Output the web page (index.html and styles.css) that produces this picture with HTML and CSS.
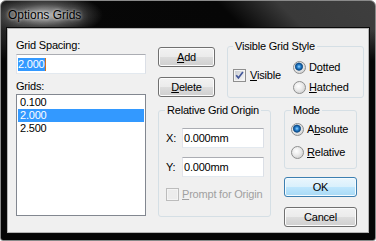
FILE: index.html
```html
<!doctype html>
<html lang="en">

<head>
    <meta charset="UTF-8" />
    <title>Options Grids</title>
    <link rel="stylesheet" href="styles.css">
</head>

<body>
    <div class="window">
        <!-- Title bar -->
        <div class="titlebar">
            <span class="title">Options Grids</span>
        </div>

        <div class="client">
            <!-- Grid list -->
            <div class="col-left">
                <div class="label">Grid Spacing:</div>
                <div class="textbox wide"><span class="sel">2.000</span><span class="caret"></span></div>
                <div class="label grids-label">Grids:</div>
                <div class="listbox">
                    <div class="item">0.100</div>
                    <div class="item selected">2.000</div>
                    <div class="item">2.500</div>
                </div>
            </div>

            <div class="col-right">
                <div class="row-top">
                    <div class="btn-stack">
                        <button class="btn"><u>A</u>dd</button>
                        <button class="btn"><u>D</u>elete</button>
                    </div>

                    <fieldset class="group style-group">
                        <legend>Visible Grid Style</legend>
                        <div class="opt check-item">
                            <svg class="cb" width="13" height="13" viewBox="0 0 13 13">
                                <defs>
                                    <linearGradient id="cbg" x1="0" y1="0" x2="1" y2="1">
                                        <stop offset="0" stop-color="#c9cdd3" />
                                        <stop offset="1" stop-color="#f7f7f7" />
                                    </linearGradient>
                                </defs>
                                <rect x="0.5" y="0.5" width="12" height="12" fill="#f4f4f4" stroke="#8f8f8f" />
                                <rect x="2" y="2" width="9" height="9" fill="url(#cbg)" />
                                <path d="M3.2 6.2 L5.4 8.9 L9.9 3.1" fill="none" stroke="#43579a" stroke-width="1.7" />
                            </svg>
                            <span class="wide-gap"><u>V</u>isible</span>
                        </div>
                        <div class="radio-col">
                            <div class="opt"><span class="radio on"></span><span>D<u>o</u>tted</span></div>
                            <div class="opt"><span class="radio"></span><span><u>H</u>atched</span></div>
                        </div>
                    </fieldset>
                </div>

                <div class="row-bottom">
                    <fieldset class="group origin-group">
                        <legend>Relative Grid Origin</legend>
                        <div class="field">
                            <span class="field-label">X:</span>
                            <div class="textbox small">0.000mm</div>
                        </div>
                        <div class="field field-y">
                            <span class="field-label">Y:</span>
                            <div class="textbox small">0.000mm</div>
                        </div>
                        <div class="opt disabled prompt">
                            <svg class="cb" width="13" height="13" viewBox="0 0 13 13">
                                <rect x="0.5" y="0.5" width="12" height="12" fill="#f4f4f4" stroke="#bcbcbc" />
                                <rect x="2" y="2" width="9" height="9" fill="#ececec" />
                            </svg>
                            <span><u>P</u>rompt for Origin</span>
                        </div>
                    </fieldset>

                    <div class="side-stack">
                        <fieldset class="group mode-group">
                            <legend>Mode</legend>
                            <div class="opt"><span class="radio on"></span><span>A<u>b</u>solute</span></div>
                            <div class="opt mode-second"><span class="radio"></span><span><u>R</u>elative</span></div>
                        </fieldset>
                        <button class="btn default ok">OK</button>
                        <button class="btn cancel">Cancel</button>
                    </div>
                </div>
            </div>
        </div>
    </div>
</body>

</html>
```

FILE: styles.css
```css
body {
    margin: 0;
    font-family: "Liberation Sans", Arial, sans-serif;
    font-size: 11px;
    letter-spacing: -0.2px;
    color: #000;
}

/* Window frame */
.window {
    width: 376px;
    height: 241px;
    box-sizing: border-box;
    border: 1px solid #8a8a8a;
    border-radius: 6px 6px 3px 3px;
    padding: 0 6px 7px;
    display: flex;
    flex-direction: column;
    background:
        radial-gradient(ellipse 58px 22px at 44px 14px, rgba(215, 215, 215, 0.85) 0%, rgba(140, 140, 140, 0.5) 50%, rgba(60, 60, 60, 0) 100%),
        linear-gradient(to bottom, rgba(6, 6, 6, 0) 28px, #060606 60px),
        linear-gradient(45deg, #303030 0%, #2a2a2a 33%, #070707 43%, #060606 74%, #3a3a3a 84%, #3e3e3e 100%);
}

.titlebar {
    height: 27px;
    display: flex;
    align-items: center;
    padding-left: 1px;
}

.title {
    font-size: 12px;
    letter-spacing: 0;
    color: #000;
    text-shadow: 0 0 3px rgba(255, 255, 255, 0.8), 0 0 8px rgba(255, 255, 255, 0.6);
}

.client {
    height: 205px;
    box-sizing: border-box;
    border: 1px solid #b4b4b4;
    box-shadow: 0 0 0 1px #0a0a0a;
    background: #f0f0f0;
    display: flex;
    padding: 10px 0 0 8px;
}

/* Left column */
.col-left {
    width: 130px;
    display: flex;
    flex-direction: column;
}

.label {
    line-height: 13px;
}

.grids-label {
    margin-top: 6px;
}

.textbox {
    box-sizing: border-box;
    height: 20px;
    border: 1px solid;
    border-color: #abadb3 #dbdfe6 #e3e9ef #e2e3ea;
    background: #fff;
    display: flex;
    align-items: center;
    padding: 0 1px;
    margin-top: 2px;
}

.textbox.wide {
    width: 130px;
}

.sel {
    background: #3399ff;
    color: #fff;
    line-height: 13px;
}

.caret {
    width: 1px;
    height: 13px;
    background: #d2701c;
}

.listbox {
    box-sizing: border-box;
    width: 130px;
    height: 122px;
    margin-top: 1px;
    border: 1px solid #828790;
    background: #fff;
    padding: 1px;
}

.item {
    height: 13px;
    line-height: 13px;
    padding-left: 2px;
}

.item.selected {
    background: #3399ff;
    color: #fff;
}

/* Right side */
.col-right {
    margin-left: 12px;
    display: flex;
    flex-direction: column;
}

.row-top {
    display: flex;
    align-items: flex-start;
}

.btn-stack {
    width: 57px;
    margin-top: 8px;
    display: flex;
    flex-direction: column;
    gap: 10px;
}

.btn {
    box-sizing: border-box;
    width: 100%;
    height: 20px;
    padding: 0;
    border: 1px solid #707070;
    border-radius: 3px;
    box-shadow: inset 0 0 0 1px #fcfcfc;
    background: linear-gradient(#f2f2f2 0%, #ebebeb 50%, #dddddd 51%, #cfcfcf 100%);
    font: inherit;
    letter-spacing: inherit;
    color: #000;
}

.btn.default {
    border-color: #3c7fb1;
    box-shadow: inset 0 0 0 1px #f4fbff;
    background: linear-gradient(#eaf6fd 0%, #d9f0fc 50%, #bee6fd 51%, #a7d9f5 100%);
}

/* Group boxes */
.group {
    margin: 0;
    min-width: 0;
    box-sizing: border-box;
    border: 1px solid #d5dfe5;
    border-radius: 3px;
}

.group legend {
    padding: 0 2px;
    line-height: 13px;
}

.style-group {
    margin: 1px 0 0 12px;
    width: 137px;
    height: 58px;
    padding: 8px 0 0 5px;
    display: flex;
    align-items: flex-start;
}

.check-item {
    width: 60px;
    margin-top: 8px;
}

.radio-col {
    display: flex;
    flex-direction: column;
    gap: 7px;
}

.opt {
    display: flex;
    align-items: center;
    height: 13px;
    line-height: 13px;
    gap: 3px;
}

.opt .wide-gap {
    margin-left: 1px;
}

.cb {
    display: block;
    flex: none;
}

.radio {
    width: 13px;
    height: 13px;
    box-sizing: border-box;
    flex: none;
    border-radius: 50%;
    border: 1px solid #8e8f8f;
    background: radial-gradient(circle at 40% 38%, #ffffff 0%, #ececec 40%, #c4c4c4 100%);
}

.radio.on {
    background:
        radial-gradient(circle at 45% 42%, #9ad6ff 0, #2f8ad6 1.6px, #0c4e8e 3.2px, #3d6d99 3.8px, rgba(255, 255, 255, 0) 4.4px),
        radial-gradient(circle at 40% 38%, #ffffff 0%, #ececec 40%, #c4c4c4 100%);
}

.row-bottom {
    display: flex;
    align-items: flex-start;
    margin-top: 6px;
}

.origin-group {
    width: 113px;
    height: 113px;
    padding: 11px 0 0 7px;
}

.origin-group legend {
    margin-left: -1px;
}

.field {
    display: flex;
    align-items: center;
}

.field-label {
    width: 16px;
    line-height: 13px;
}

.textbox.small {
    width: 82px;
    margin-top: 0;
}

.field-y {
    margin-top: 9px;
}

.prompt {
    margin-top: 11px;
}

.disabled {
    color: #a0a0a0;
}

.side-stack {
    margin-left: 13px;
    width: 73px;
    display: flex;
    flex-direction: column;
}

.mode-group {
    height: 65px;
    padding: 6px 0 0 6px;
}

.mode-second {
    margin-top: 10px;
}

.ok {
    margin-top: 8px;
}

.cancel {
    margin-top: 10px;
}
```
